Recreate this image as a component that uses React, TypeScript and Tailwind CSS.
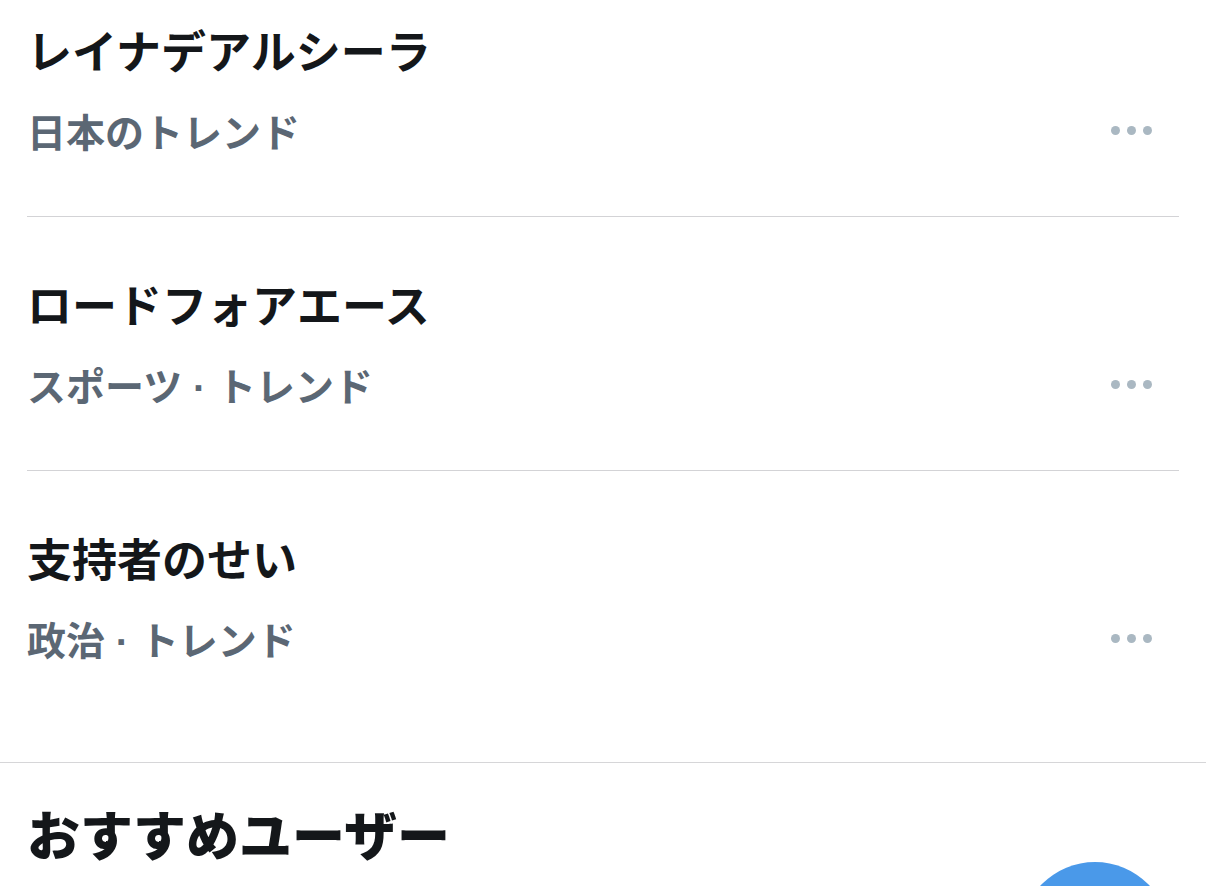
import { Fragment } from "react";

interface Trend {
  title: string;
  category?: string;
  label: string;
}

const trends: Trend[] = [
  { title: "レイナデアルシーラ", label: "日本のトレンド" },
  { title: "ロードフォアエース", category: "スポーツ", label: "トレンド" },
  { title: "支持者のせい", category: "政治", label: "トレンド" },
];

function MoreDots() {
  return (
    <div className="flex items-center gap-[7px] pr-[27px]">
      <span className="w-[9px] h-[9px] rounded-full bg-[#aab8c2]" />
      <span className="w-[9px] h-[9px] rounded-full bg-[#aab8c2]" />
      <span className="w-[9px] h-[9px] rounded-full bg-[#aab8c2]" />
    </div>
  );
}

export default function App() {
  return (
    <div
      className="relative w-[1206px] h-[886px] overflow-hidden bg-white"
      style={{ fontFamily: '"Noto Sans CJK JP", "Noto Sans", sans-serif' }}
    >
      {/* Trends list */}
      <div className="px-[27px]">
        {trends.map((t, i) => (
          <Fragment key={t.title}>
            {i > 0 && <div className="h-px bg-[#d3d3d6]" />}
            <div
              className={
                i === 0
                  ? "pt-[22px] pb-[62px]"
                  : i === trends.length - 1
                    ? "pt-[59px] pb-[100px]"
                    : "pt-[59px] pb-[62px]"
              }
            >
              <h2 className="h-[56px] text-[45px] leading-[56px] font-bold text-[#14171a]">
                {t.title}
              </h2>
              <div className="mt-[28px] h-[48px] flex items-center justify-between">
                <p className="h-[48px] text-[39px] leading-[48px] font-semibold text-[#5b6774] whitespace-nowrap">
                  {t.category && (
                    <>
                      {t.category}
                      <span className="font-['Liberation_Sans',sans-serif] font-bold leading-none">
                        {" · "}
                      </span>
                    </>
                  )}
                  {t.label}
                </p>
                <MoreDots />
              </div>
            </div>
          </Fragment>
        ))}
      </div>

      {/* Section divider */}
      <div className="h-px bg-[#d6d6d8]" />

      {/* Who to follow */}
      <div className="px-[27px] pt-[38px]">
        <h2 className="text-[53px] leading-[64px] font-black text-[#14171a]">
          おすすめユーザー
        </h2>
      </div>

      {/* Floating compose button */}
      <div className="absolute left-[1020px] top-[862px] w-[150px] h-[150px] rounded-full bg-[#4a99e9]" />
    </div>
  );
}
